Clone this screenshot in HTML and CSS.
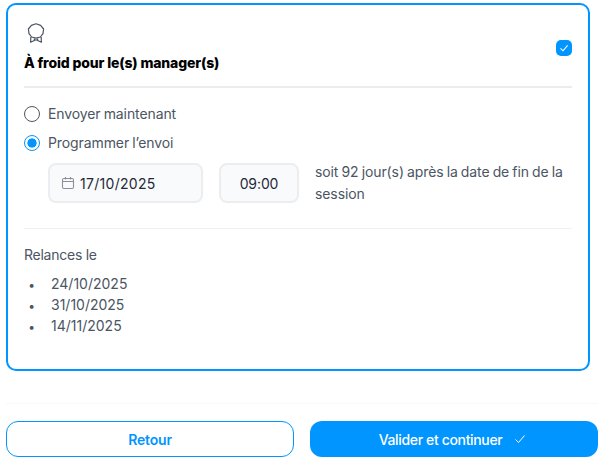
FILE: index.html
```html
<!DOCTYPE html>
<html lang="fr">
<head>
<meta charset="utf-8">
<title>À froid</title>
<link rel="stylesheet" href="styles.css">
</head>
<body>
<main class="page">
  <section class="card">
    <header class="card-head">
      <div class="head-text">
        <svg class="medal" width="18" height="20" viewBox="0 0 18 20" fill="none" stroke="#4b5563" stroke-width="1.2" stroke-linejoin="round">
          <path d="M9 0.8 L13.6 2.4 L16.6 6 L16 10.6 L13.4 14 L9 15.2 L4.6 14 L2 10.6 L1.4 6 L4.4 2.4 Z"/>
          <path d="M3.8 14 L3.6 19.2 L9 16.8 L14.4 19.2 L14.2 14"/>
          <path d="M7.4 15.4 V17.4 M10.6 15.4 V17.4"/>
        </svg>
        <h2 class="title">À froid pour le(s) manager(s)</h2>
      </div>
      <span class="checkbox">
        <svg width="10" height="10" viewBox="0 0 10 10" fill="none" stroke="#fff" stroke-width="1.1"><path d="M1.5 5.4 L4 7.8 L8.6 2.4"/></svg>
      </span>
    </header>
    <div class="options">
      <label class="radio-row"><span class="radio"></span>Envoyer maintenant</label>
      <label class="radio-row"><span class="radio radio-on"></span>Programmer l’envoi</label>
      <div class="schedule">
        <div class="field field-date">
          <svg width="14" height="14" viewBox="0 0 14 14" fill="none" stroke="#8a909b" stroke-width="1.1"><rect x="1.5" y="2.5" width="11" height="10" rx="1.5"/><path d="M1.5 5.5 H12.5 M4.5 1 V3.5 M9.5 1 V3.5"/></svg>
          <span class="date-value">17/10/2025</span>
        </div>
        <div class="field field-time">09:00</div>
        <p class="note">soit 92 jour(s) après la date de fin de la session</p>
      </div>
    </div>
    <div class="reminders">
      <p class="rem-title">Relances le</p>
      <ul class="rem-list">
        <li>24/10/2025</li>
        <li>31/10/2025</li>
        <li>14/11/2025</li>
      </ul>
    </div>
  </section>
  <footer class="footer">
    <button class="btn btn-outline">Retour</button>
    <button class="btn btn-solid">Valider et continuer
      <svg width="12" height="12" viewBox="0 0 12 12" fill="none" stroke="#fff" stroke-width="1"><path d="M1.5 6.5 L4.5 9.5 L10.5 2.5"/></svg>
    </button>
  </footer>
</main>
</body>
</html>
```
FILE: styles.css
```css
* { box-sizing: border-box; }
html, body { margin: 0; padding: 0; background: #fff; }
body { font-family: Inter, "Noto Sans", sans-serif; font-size: 14px; color: #4b5563; }
.page { width: 601px; height: 466px; padding: 3px 3px 0 6px; display: flex; flex-direction: column; overflow: hidden; }
.card { width: 584px; height: 368px; border: 2px solid #0095ff; border-radius: 10px; padding: 18px 16px 0 16px; flex: none; }
.card-head { display: flex; justify-content: space-between; align-items: center; padding-bottom: 13px; border-bottom: 2px solid #ebebf0; }
.head-text { display: flex; flex-direction: column; gap: 10px; align-items: flex-start; }
.medal { margin-left: 3px; display: block; }
.title { margin: 0; font-size: 14px; line-height: 20px; font-weight: 800; letter-spacing: -0.15px; color: #000; }
.checkbox { width: 16px; height: 16px; border-radius: 5px; background: #0095ff; display: flex; align-items: center; justify-content: center; margin-top: -1px; }
.options { padding-top: 11px; padding-bottom: 23px; border-bottom: 1px solid #f0f0f3; display: flex; flex-direction: column; letter-spacing: -0.1px; word-spacing: -0.7px; }
.radio-row { display: flex; align-items: center; gap: 8px; height: 29px; line-height: 20px; }
.radio { width: 16px; height: 16px; border-radius: 50%; border: 1.3px solid #4b5563; flex: none; background: #fff; }
.radio-on { border-color: #0095ff; background: radial-gradient(circle, #0095ff 0 4.3px, #fff 4.9px); }
.schedule { display: flex; align-items: flex-start; margin: 6px 0 0 24px; gap: 16px; }
.field { height: 40px; border: 2px solid #ebedf0; border-radius: 8px; background: #f9fafb; color: #1f2937; display: flex; align-items: center; flex: none; }
.field-date { width: 155px; padding-left: 11px; gap: 5px; }
.date-value { letter-spacing: 0.3px; }
.field-time { width: 80px; justify-content: center; }
.note { margin: -2px 0 0; line-height: 22px; flex: 1; }
.reminders { padding-top: 16px; }
.rem-title { margin: 0 0 8px; line-height: 20px; letter-spacing: -0.25px; }
.rem-list { margin: 0; padding-left: 27px; }
.rem-list li { line-height: 21px; }
.rem-list li::marker { content: "•     "; font-size: 12px; }
.footer { margin-top: 32px; border-top: 1px solid #f8f8f8; padding-top: 17px; display: flex; gap: 16px; }
.btn { width: 288px; height: 36px; border-radius: 12px; font: 600 14px Inter, sans-serif; display: flex; align-items: center; justify-content: center; gap: 11px; }
.btn-outline { background: #fff; border: 1px solid #0095ff; color: #0095ff; letter-spacing: -0.2px; }
.btn-solid { background: #0095ff; border: 0; color: #fff; letter-spacing: -0.35px; font-weight: 500; gap: 12px; padding-right: 9px; }
```
